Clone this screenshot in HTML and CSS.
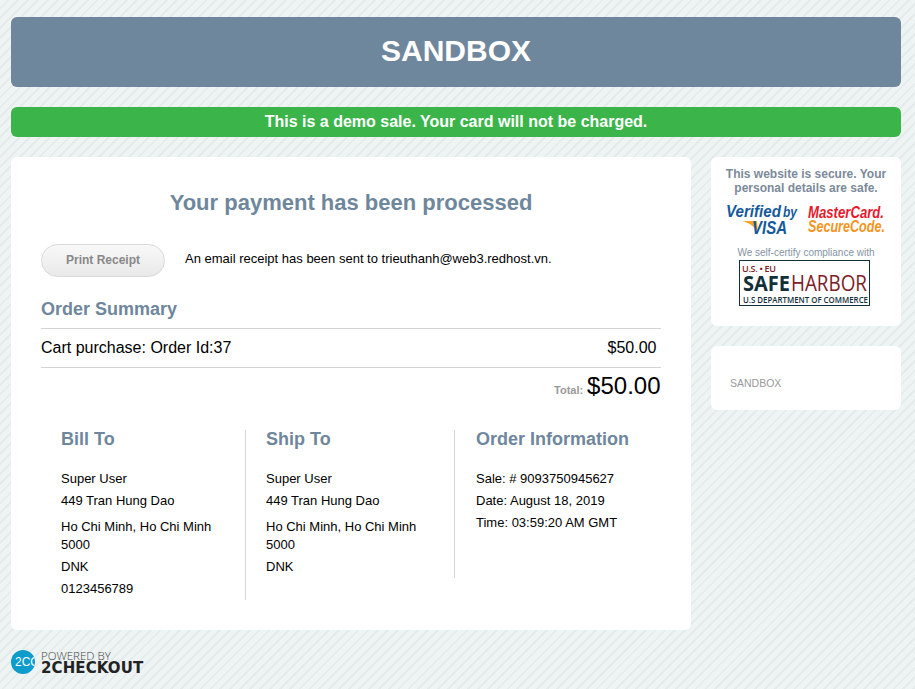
FILE: index.html
```html
<!DOCTYPE html>
<html lang="en">

<head>
  <meta charset="UTF-8">
  <meta name="viewport" content="width=device-width, initial-scale=1.0">
  <title>Payment Processed</title>
  <link rel="stylesheet" href="styles.css">
</head>

<body>
  <header class="site-header">SANDBOX</header>
  <div class="demo-notice">This is a demo sale. Your card will not be charged.</div>

  <div class="page-columns">
    <main class="card receipt">
      <h1>Your payment has been processed</h1>

      <div class="receipt-actions">
        <button class="print-button">Print Receipt</button>
        <p>An email receipt has been sent to trieuthanh@web3.redhost.vn.</p>
      </div>

      <h2>Order Summary</h2>
      <div class="order-line">
        <span>Cart purchase: Order Id:37</span>
        <span class="order-price">$50.00</span>
      </div>
      <div class="order-total"><small>Total:</small> <span>$50.00</span></div>

      <div class="details">
        <section class="details-col">
          <h3>Bill To</h3>
          <p>Super User</p>
          <p class="street">449 Tran Hung Dao</p>
          <p>Ho Chi Minh, Ho Chi Minh 5000</p>
          <p>DNK</p>
          <p>0123456789</p>
        </section>
        <section class="details-col">
          <h3>Ship To</h3>
          <p>Super User</p>
          <p class="street">449 Tran Hung Dao</p>
          <p>Ho Chi Minh, Ho Chi Minh 5000</p>
          <p>DNK</p>
        </section>
        <section class="details-col">
          <h3>Order Information</h3>
          <p>Sale: # 9093750945627</p>
          <p>Date: August 18, 2019</p>
          <p>Time: 03:59:20 AM GMT</p>
        </section>
      </div>
    </main>

    <aside class="sidebar">
      <div class="card secure">
        <p class="secure-title">This website is secure. Your personal details are safe.</p>
        <div class="badges">
          <svg class="badge" width="74" height="36" viewBox="0 0 74 36">
            <text x="1" y="14" class="visa-top" textLength="55" lengthAdjust="spacingAndGlyphs">Verified</text>
            <text x="58" y="14" class="visa-by" textLength="14" lengthAdjust="spacingAndGlyphs">by</text>
            <path d="M17 18 L32 18 L33 30 C30 24 25 20 17 18 Z" fill="#f5a623" />
            <text x="27" y="31" class="visa-word" textLength="35" lengthAdjust="spacingAndGlyphs">VISA</text>
          </svg>
          <svg class="badge" width="80" height="36" viewBox="0 0 80 36">
            <text x="1" y="15" class="mc-top" textLength="76" lengthAdjust="spacingAndGlyphs">MasterCard.</text>
            <text x="1" y="29" class="mc-bottom" textLength="77" lengthAdjust="spacingAndGlyphs">SecureCode.</text>
          </svg>
        </div>
        <p class="secure-note">We self-certify compliance with</p>
        <svg class="badge badge-harbor" width="131" height="46" viewBox="0 0 131 46">
          <rect x="0.5" y="0.5" width="130" height="45" fill="#fff" stroke="#12303a" />
          <text x="3" y="12" class="sh-top" textLength="34" lengthAdjust="spacing">U.S. &#8226; EU</text>
          <text x="4" y="31" class="sh-safe" textLength="47" lengthAdjust="spacingAndGlyphs">SAFE</text>
          <text x="52" y="31" class="sh-harbor" textLength="76" lengthAdjust="spacingAndGlyphs">HARBOR</text>
          <text x="4" y="43" class="sh-dept" textLength="125" lengthAdjust="spacingAndGlyphs">U.S DEPARTMENT OF COMMERCE</text>
        </svg>
      </div>
      <div class="card merchant">SANDBOX</div>
    </aside>
  </div>

  <footer class="powered">
    <span class="powered-logo">2CO</span>
    <span class="powered-text">
      <span class="powered-by">POWERED BY</span>
      <strong>2CHECKOUT</strong>
    </span>
  </footer>
</body>

</html>
```

FILE: styles.css
```css
html {
  height: 100%;
}

body {
  margin: 0;
  padding: 17px 14px 14px 11px;
  font-family: "Liberation Sans", Arial, sans-serif;
  font-size: 14px;
  color: #000;
  background-color: #edf2f2;
  background-image: repeating-linear-gradient(135deg, #eef3f3 0, #eef3f3 5px, #e5ebeb 5px, #e5ebeb 7px);
}

p {
  margin: 0;
}

.site-header {
  height: 70px;
  line-height: 68px;
  text-align: center;
  font-size: 30px;
  font-weight: bold;
  color: #fff;
  background-color: #6f879c;
  border-radius: 6px;
}

.demo-notice {
  height: 30px;
  line-height: 29px;
  margin-top: 20px;
  text-align: center;
  font-size: 16px;
  font-weight: bold;
  color: #fff;
  background-color: #3bb54a;
  border-radius: 6px;
}

.page-columns {
  display: flex;
  align-items: flex-start;
  gap: 20px;
  margin-top: 20px;
}

.card {
  background-color: #fff;
  border-radius: 6px;
}

.receipt {
  box-sizing: border-box;
  width: 680px;
  height: 473px;
  padding: 31px 30px 0;
}

.receipt h1 {
  margin: 0;
  text-align: center;
  font-size: 22px;
  line-height: 30px;
  color: #6f879c;
}

.receipt-actions {
  display: flex;
  align-items: center;
  gap: 20px;
  margin-top: 26px;
}

.print-button {
  width: 124px;
  height: 33px;
  padding: 0 0 2px;
  font-family: inherit;
  font-size: 12px;
  font-weight: bold;
  color: #888;
  background: linear-gradient(#f8f8f8, #e9e9e9);
  border: 1px solid #d9d9d9;
  border-radius: 17px;
}

.receipt-actions p {
  font-size: 13px;
  padding-bottom: 5px;
}

.receipt h2 {
  margin: 21px 0 0;
  font-size: 18px;
  line-height: 22px;
  color: #6f879c;
}

.order-line {
  display: flex;
  justify-content: space-between;
  height: 38px;
  line-height: 37px;
  margin-top: 8px;
  font-size: 16px;
  border-top: 1px solid #d5d5d5;
  border-bottom: 1px solid #d5d5d5;
}

.order-price {
  padding-right: 4.5px;
}

.order-total {
  text-align: right;
  line-height: 36px;
  padding-right: 0.5px;
}

.order-total small {
  font-size: 11px;
  font-weight: bold;
  color: #999;
}

.order-total span {
  font-size: 24px;
}

.details {
  display: grid;
  grid-template-columns: 205px 209px 1fr;
  align-items: start;
  margin-top: 22px;
}

.details-col {
  padding: 0 20px;
  border-right: 1px solid #d5d5d5;
}

.details-col:last-child {
  padding: 0 0 0 21px;
  border-right: none;
}

.details-col h3 {
  margin: 0 0 22px;
  font-size: 18px;
  line-height: 18px;
  color: #6f879c;
}

.details-col p {
  line-height: 18px;
  margin-bottom: 4px;
  font-size: 13px;
}

.details-col p:last-child {
  margin-bottom: 2px;
}

.details-col .street {
  margin-bottom: 8px;
}

.sidebar {
  display: flex;
  flex-direction: column;
  gap: 20px;
  width: 190px;
}

.secure {
  box-sizing: border-box;
  height: 169px;
  padding: 10px 5px 0;
  text-align: center;
}

.secure-title {
  font-size: 12px;
  font-weight: bold;
  line-height: 14px;
  color: #7b8a9a;
}

.badges {
  display: flex;
  justify-content: space-between;
  margin-top: 8px;
  padding: 0 9px;
}

.badge {
  overflow: visible;
}

.secure-note {
  margin-top: 8px;
  font-size: 10px;
  line-height: 12px;
  color: #8593a3;
}

.badge-harbor {
  display: block;
  margin: 1px 0 0 23px;
}

.visa-top,
.visa-by,
.visa-word {
  font-family: "Liberation Sans", sans-serif;
  font-style: italic;
  font-weight: bold;
  fill: #14599c;
}

.visa-top {
  font-size: 16px;
}

.visa-by {
  font-size: 14px;
}

.visa-word {
  font-size: 19px;
}

.mc-top,
.mc-bottom {
  font-family: "Liberation Sans", sans-serif;
  font-style: italic;
  font-weight: bold;
  font-size: 17px;
}

.mc-top {
  fill: #e8192c;
}

.mc-bottom {
  fill: #f7941d;
}

.sh-top {
  font-family: "Open Sans", sans-serif;
  font-size: 9px;
  font-weight: 600;
  fill: #7d2027;
}

.sh-safe {
  font-family: "Open Sans", sans-serif;
  font-size: 21px;
  font-weight: bold;
  fill: #12303a;
}

.sh-harbor {
  font-family: "Open Sans", sans-serif;
  font-size: 21px;
  fill: #7d2027;
}

.sh-dept {
  font-family: "Open Sans", sans-serif;
  font-size: 9.5px;
  font-weight: 600;
  fill: #12303a;
}

.merchant {
  height: 64px;
  box-sizing: border-box;
  padding: 31px 19px 0;
  font-size: 10.5px;
  line-height: 13px;
  color: #999;
}

.powered {
  display: flex;
  align-items: flex-start;
  gap: 6px;
  margin-top: 20px;
}

.powered-logo {
  box-sizing: border-box;
  width: 24px;
  height: 24px;
  padding-left: 4px;
  line-height: 24px;
  overflow: hidden;
  font-size: 12px;
  color: #fff;
  background-color: #0d9ccb;
  border-radius: 50%;
  white-space: nowrap;
}

.powered-text {
  display: flex;
  flex-direction: column;
}

.powered-by {
  font-family: "Open Sans", sans-serif;
  font-size: 11.5px;
  font-weight: 300;
  line-height: 11px;
  color: #444;
}

.powered-text strong {
  font-family: "DejaVu Sans", sans-serif;
  font-size: 15px;
  font-weight: bold;
  line-height: 15px;
  letter-spacing: 0.1px;
  color: #222;
}
```
